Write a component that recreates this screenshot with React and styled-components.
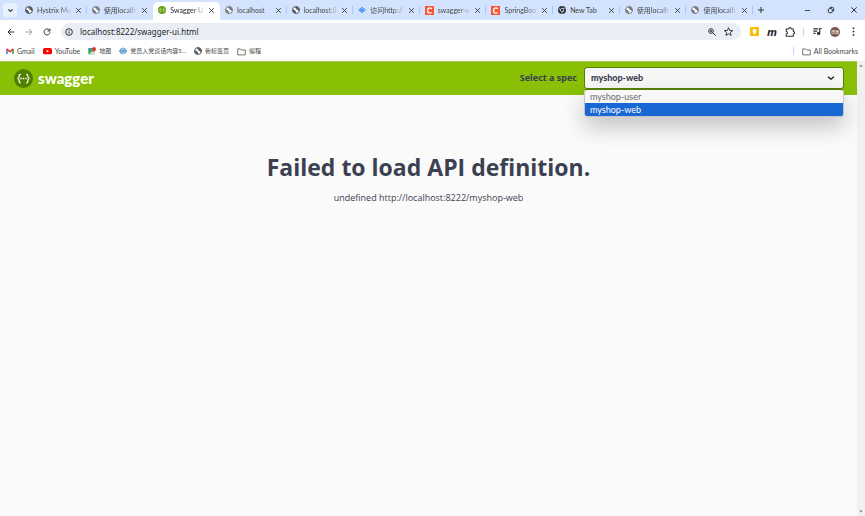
import React, { useState } from "react";
import styled, { createGlobalStyle, css } from "styled-components";

const GlobalStyle = createGlobalStyle`
  * { box-sizing: border-box; }
  body { margin: 0; background: #fafafa; }
  button, select, input { font: inherit; color: inherit; }
`;

const ui = `Lato, "Noto Sans CJK SC", sans-serif`;

const Browser = styled.div`
  display: flex;
  flex-direction: column;
  min-height: 100vh;
  font: 7px/10px ${ui};
  color: #474747;
  background: #fff;
`;

const TabStrip = styled.header`
  display: flex;
  align-items: center;
  height: 20px;
  background: #d3e3fd;
`;

const IconButton = styled.button`
  display: inline-flex;
  align-items: center;
  justify-content: center;
  flex: none;
  width: ${(p) => p.$w || 10}px;
  height: ${(p) => p.$h || 12}px;
  padding: 0;
  border: 0;
  border-radius: 4px;
  background: ${(p) => p.$bg || "transparent"};
  color: ${(p) => p.$color || "#303235"};
`;

const SearchTabs = styled(IconButton)`
  margin: 0 3px;
`;

const TabList = styled.nav`
  display: flex;
  flex: 1;
  align-items: stretch;
  height: 20px;
  min-width: 0;
`;

const Tab = styled.div`
  display: flex;
  align-items: center;
  flex: 1 1 0;
  min-width: 0;
  margin-top: ${(p) => (p.$active ? 2 : 0)}px;
  padding: 0 7px 0 5px;
  gap: 4px;
  border-radius: 5px 5px 0 0;
  ${(p) => p.$active && css`background: #fff; padding-bottom: 2px;`}
  &::after {
    content: "";
    width: 1px;
    height: 8px;
    margin-right: -7px;
    background: ${(p) => (p.$line ? "#a8c7fa" : "transparent")};
  }
`;

const TabTitle = styled.a`
  flex: 1;
  min-width: 0;
  white-space: nowrap;
  color: ${(p) => (p.$active ? "#1f1f1f" : "#474747")};
  text-decoration: none;
  mask-image: linear-gradient(to right, #000 65%, transparent 105%);
  ${(p) => p.$short && css`mask-image: none;`}
`;

const WindowButtons = styled.div`
  display: flex;
  gap: 12px;
  margin: 0 6px 0 33px;
`;

const Toolbar = styled.div`
  display: flex;
  align-items: center;
  height: 23px;
  padding: 0 7px 0 6px;
  border-top-right-radius: 5px;
  background: #fff;
`;

const Nav = styled.div`
  display: flex;
  gap: 8px;
  margin-right: 9px;
`;

const AddressBar = styled.div`
  display: flex;
  align-items: center;
  flex: 1;
  height: 17px;
  padding: 0 8px 0 3px;
  gap: 6px;
  border-radius: 9px;
  background: #e9eef6;
`;

const Address = styled.input`
  flex: 1;
  min-width: 0;
  padding: 0;
  border: 0;
  outline: 0;
  background: transparent;
  font: 8px/12px "Noto Sans", sans-serif;
  color: #1f1f1f;
`;

const Extensions = styled.div`
  display: flex;
  align-items: center;
  gap: 8px;
  margin-left: 8px;
`;

const ExtensionLetter = styled.span`
  width: 10px;
  font: italic bold 11px/12px "Open Sans", sans-serif;
  text-align: center;
  color: #1f1f1f;
`;

const Divider = styled.span`
  width: 1px;
  height: 8px;
  background: #c2d7fb;
`;

const Avatar = styled.span`
  width: 10px;
  height: 10px;
  overflow: hidden;
  border-radius: 50%;
  background: #795548;
  color: #fff;
  font: 4px/10px "Noto Sans CJK SC", sans-serif;
  text-align: center;
`;

const Bookmarks = styled.nav`
  display: flex;
  align-items: center;
  height: 18px;
  padding: 0 7px 2px 6px;
  gap: 8px;
`;

const Bookmark = styled.a`
  display: flex;
  align-items: center;
  gap: 3px;
  font-size: ${(p) => (p.$cjk ? 6 : 7)}px;
  color: #474747;
  text-decoration: none;
  white-space: nowrap;
`;

const AllBookmarks = styled.div`
  display: flex;
  align-items: center;
  gap: 8px;
  margin-left: auto;
`;

const Viewport = styled.div`
  display: flex;
  flex: 1;
`;

const Page = styled.div`
  flex: 1;
  min-width: 0;
  background: #fafafa;
`;

const Scrollbar = styled.div`
  display: flex;
  flex-direction: column;
  justify-content: space-between;
  align-items: center;
  width: 8px;
  padding: 3px 0;
  background: #f1f1f1;
`;

const Topbar = styled.div`
  display: flex;
  align-items: center;
  justify-content: space-between;
  height: 34px;
  padding: 0 13px 1px 14px;
  border-top: 1px solid #a9c95f;
  background: #89bf04;
`;

const Logo = styled.a`
  display: flex;
  align-items: center;
  gap: 5px;
  color: #fff;
  text-decoration: none;
  font: 900 15px/18px Lato, sans-serif;
`;

const SpecLabel = styled.label`
  margin: 0 7px 0 auto;
  font: bold 9px/12px "Noto Sans", sans-serif;
  color: #3b4151;
`;

const SelectWrap = styled.div`
  position: relative;
  flex: 0 1 260px;
  height: 22px;
`;

const Select = styled.select`
  width: 100%;
  height: 22px;
  padding: 0 6px;
  appearance: none;
  border: 1px solid #547f00;
  border-radius: 3px;
  outline: 0;
  background: #f7f7f7;
  color: #3b4151;
  font: 900 9px/12px Lato, sans-serif;
`;

const SelectArrow = styled.span`
  position: absolute;
  top: 6px;
  right: 8px;
  display: flex;
  color: #111;
  pointer-events: none;
`;

const Options = styled.ul`
  position: absolute;
  top: 22px;
  left: 0;
  right: 0;
  margin: 0;
  padding: 0;
  overflow: hidden;
  list-style: none;
  border: 1px solid #c3c6c9;
  border-top-color: #547f00;
  border-radius: 3px;
  background: #f7f7f7;
  box-shadow: 0 10px 22px rgba(0, 0, 0, 0.22);
`;

const Option = styled.li`
  height: 13px;
  padding: 0 5px;
  font: 9px/13px Lato, sans-serif;
  background: ${(p) => (p.$selected ? "#1967d2" : "transparent")};
  color: ${(p) => (p.$selected ? "#fff" : "#6b6b73")};
`;

const Failure = styled.main`
  padding: 54px 20px;
  text-align: center;
  color: #3b4151;
`;

const FailureTitle = styled.h1`
  margin: 0 0 7px;
  font: bold 23px/36px "Open Sans", sans-serif;
`;

const FailureText = styled.p`
  margin: 0;
  font: 9px/12px "Open Sans", sans-serif;
`;

const Line = ({ size = 8, d, w = 2, children }) => (
  <svg width={size} height={size} viewBox="0 0 24 24" fill="none" stroke="currentColor" strokeWidth={w} aria-hidden="true">
    {d && <path d={d} />}
    {children}
  </svg>
);

const Close = ({ size = 7 }) => <Line size={size} w={3} d="M4 4l16 16M20 4L4 20" />;

const Globe = ({ faded }) => (
  <svg width="8" height="8" viewBox="0 0 24 24" aria-hidden="true">
    <circle cx="12" cy="12" r="10.5" fill="#fff" stroke={faded ? "#72777d" : "#50555b"} strokeWidth="3" />
    <path d="M2 10l7 3 1 3 3 1-2 5C5 21 1 16 2 10zM11 2l-2 4 5 2-1 3 5 1 2 4c4-6 1-14-9-14z" fill={faded ? "#72777d" : "#50555b"} />
  </svg>
);

const SwaggerIcon = ({ size = 8, bg = "#6b9f13", fg = "#fff" }) => (
  <svg width={size} height={size} viewBox="0 0 24 24" aria-hidden="true">
    <circle cx="12" cy="12" r="12" fill={bg} />
    <path d="M8.5 6.5Q6.5 6.5 6.5 9T4.5 12Q6.5 12.500 6.500 15T8.500 17.500M15.500 6.500Q17.500 6.500 17.500 9T19.500 12Q17.500 12.500 17.500 15T15.500 17.500" fill="none" stroke={fg} strokeWidth="1.600" />
    <path d="M8 12h1.800M11.100 12h1.800M14.200 12h1.800" stroke={fg} strokeWidth="1.800" />
  </svg>
);

const Diamond = () => (
  <svg width="8" height="8" viewBox="0 0 24 24" fill="none" stroke="#2d86f5" strokeWidth="2.500" aria-hidden="true">
    <path d="M1.500 12L12 4l10.500 8L12 20z" />
    <path d="M7 12l5-3.500 5 3.500-5 3.500z" fill="#2d86f5" />
  </svg>
);

const CIcon = () => (
  <svg width="9" height="9" viewBox="0 0 24 24" aria-hidden="true">
    <rect width="24" height="24" fill="#fc5531" />
    <path d="M18 8c-1-2-3-3-5-3-4 0-6 3-6 7 0 5 3 7 6 7 2 0 4-1 5-2" fill="none" stroke="#fff" strokeWidth="3.500" />
  </svg>
);

const ChromeIcon = () => (
  <svg width="8" height="8" viewBox="0 0 24 24" aria-hidden="true">
    <circle cx="12" cy="12" r="12" fill="#303235" />
    <circle cx="12" cy="12" r="5" fill="#303235" stroke="#dfe9fb" strokeWidth="2" />
    <path d="M12 7h11M7.700 14.500L2 5M16.300 14.500L11 24" stroke="#dfe9fb" strokeWidth="1.800" />
  </svg>
);

const Folder = () => <Line size={9} d="M2 5h7l3 3h10v13H2z" />;

const Gmail = () => (
  <svg width="8" height="8" viewBox="0 0 24 24" fill="none" strokeWidth="5" aria-hidden="true">
    <path d="M3 21V6" stroke="#4285f4" />
    <path d="M21 21V6" stroke="#34a853" />
    <path d="M2 6l10 8 10-8" stroke="#ea4335" />
  </svg>
);

const YouTube = () => (
  <svg width="9" height="8" viewBox="0 0 27 24" aria-hidden="true">
    <rect y="3" width="27" height="19" rx="5" fill="#f00" />
    <path d="M11 8.500l7 4-7 4z" fill="#fff" />
  </svg>
);

const MapIcon = () => (
  <svg width="8" height="8" viewBox="0 0 24 24" aria-hidden="true">
    <path d="M1 3h18v19H1z" fill="#34a853" />
    <path d="M3 22L20 6v16z" fill="#d8dce2" />
    <path d="M3 3h8L1 13z" fill="#4285f4" />
    <path d="M18 0a6 6 0 0 0-6 6c0 4 6 10 6 10s6-6 6-10a6 6 0 0 0-6-6z" fill="#ea4335" />
    <circle cx="18" cy="6" r="2" fill="#811" />
  </svg>
);

const BlueSite = () => (
  <svg width="8" height="8" viewBox="0 0 24 24" fill="none" stroke="#287bc4" strokeWidth="2" aria-hidden="true">
    <circle cx="12" cy="12" r="9" />
    <path d="M0 12h6M18 12h6M9 6v12M15 6v12M9 12h6" strokeWidth="3" />
  </svg>
);

const KeepIcon = () => (
  <svg width="9" height="9" viewBox="0 0 24 24" aria-hidden="true">
    <rect width="24" height="24" rx="2" fill="#fbbc04" />
    <circle cx="12" cy="10" r="5" fill="#fff" />
    <path d="M9 13h6v6H9z" fill="#fff" />
  </svg>
);

const Triangle = ({ down }) => (
  <svg width="4" height="3" viewBox="0 0 8 6" aria-hidden="true">
    <path d={down ? "M0 1h8L4 5z" : "M0 5h8L4 1z"} fill="#858585" />
  </svg>
);

const tabs = [
  { title: "Hystrix Mo", icon: <Globe />, line: true },
  { title: "使用localh", icon: <Globe faded /> },
  { title: "Swagger U", icon: <SwaggerIcon />, active: true },
  { title: "localhost", icon: <Globe faded />, short: true, line: true },
  { title: "localhost:8", icon: <Globe />, line: true },
  { title: "访问http://", icon: <Diamond />, line: true },
  { title: "swagger-u", icon: <CIcon />, line: true },
  { title: "SpringBoo", icon: <CIcon />, line: true },
  { title: "New Tab", icon: <ChromeIcon />, line: true, short: true },
  { title: "使用localh", icon: <Globe faded />, line: true },
  { title: "使用localh", icon: <Globe faded />, line: true },
];

const bookmarks = [
  { title: "Gmail", icon: <Gmail /> },
  { title: "YouTube", icon: <YouTube /> },
  { title: "地图", icon: <MapIcon />, cjk: true },
  { title: "党员入党谈话内容5...", icon: <BlueSite />, cjk: true },
  { title: "新标签页", icon: <Globe />, cjk: true },
  { title: "编程", icon: <Folder />, cjk: true },
];

const specs = ["myshop-user", "myshop-web"];

export default function App() {
  const [spec, setSpec] = useState("myshop-web");
  return (
    <Browser>
      <GlobalStyle />
      <TabStrip>
        <SearchTabs $w={14} $h={14} $bg="#e9f1fe" aria-label="Search tabs">
          <Line size={7} w={4} d="M5 8l7 7 7-7" />
        </SearchTabs>
        <TabList>
          {tabs.map((t, i) => (
            <Tab key={i} $active={t.active} $line={t.line}>
              {t.icon}
              <TabTitle href="#" $active={t.active} $short={t.short}>{t.title}</TabTitle>
              <IconButton $w={7} aria-label="Close tab"><Close /></IconButton>
            </Tab>
          ))}
        </TabList>
        <IconButton $w={16} aria-label="New tab"><Line size={8} w={3} d="M12 3v18M3 12h18" /></IconButton>
        <WindowButtons>
          <IconButton $w={11} aria-label="Minimize"><Line size={7} w={3} d="M3 12h18" /></IconButton>
          <IconButton $w={11} aria-label="Restore">
            <Line size={8} w={3}><rect x="4" y="8" width="12" height="12" rx="3" /><path d="M8 4h8q4 0 4 4v8" /></Line>
          </IconButton>
          <IconButton $w={11} aria-label="Close"><Close size={8} /></IconButton>
        </WindowButtons>
      </TabStrip>

      <Toolbar>
        <Nav>
          <IconButton aria-label="Back"><Line w={3} d="M22 12H4M12 3l-9 9 9 9" /></IconButton>
          <IconButton $color="#9b9da0" aria-label="Forward"><Line w={3} d="M2 12h18M12 3l9 9-9 9" /></IconButton>
          <IconButton aria-label="Reload"><Line w={3} d="M19 6a9 9 0 1 0 2 7M21 2v7h-7" /></IconButton>
        </Nav>
        <AddressBar>
          <IconButton $w={10} aria-label="Site information">
            <Line w={3}><circle cx="12" cy="12" r="10" /><path d="M12 10.500v7M12 6v2.500" /></Line>
          </IconButton>
          <Address aria-label="Address" defaultValue="localhost:8222/swagger-ui.html" />
          <IconButton aria-label="Zoom"><Line w={3}><circle cx="9" cy="9" r="7" /><path d="M14 14l9 9M5.500 9h7M9 5.500v7" /></Line></IconButton>
          <IconButton aria-label="Bookmark"><Line size={9} w={2.5} d="M12 2l3 7 8 .600-6 5 2 8-7-4.400-7 4.400 2-8-6-5 8-.600z" /></IconButton>
        </AddressBar>
        <Extensions>
          <IconButton aria-label="Keep"><KeepIcon /></IconButton>
          <ExtensionLetter>m</ExtensionLetter>
          <IconButton aria-label="Extensions"><Line size={10} w={2.5} d="M3 5h6c0-5 6-5 6 0h5v6c4 0 4 6 0 6v5H3v-6c4 0 4-5 0-5z" /></IconButton>
          <Divider />
          <IconButton aria-label="Media"><Line size={9} w={3}><path d="M1 5h13M1 11h10M1 17h6M18 17V4h5" /><circle cx="15" cy="17" r="3" fill="currentColor" /></Line></IconButton>
          <Avatar>德康</Avatar>
          <IconButton aria-label="Menu">
            <svg width="9" height="9" viewBox="0 0 24 24" fill="#303235"><circle cx="12" cy="3" r="2.500" /><circle cx="12" cy="12" r="2.500" /><circle cx="12" cy="21" r="2.500" /></svg>
          </IconButton>
        </Extensions>
      </Toolbar>

      <Bookmarks>
        {bookmarks.map((b) => (
          <Bookmark key={b.title} href="#" $cjk={b.cjk}>{b.icon}{b.title}</Bookmark>
        ))}
        <AllBookmarks>
          <Divider />
          <Bookmark href="#"><Folder />All Bookmarks</Bookmark>
        </AllBookmarks>
      </Bookmarks>

      <Viewport>
        <Page>
          <Topbar>
            <Logo href="#"><SwaggerIcon size={19} bg="#4f8000" />swagger</Logo>
            <SpecLabel htmlFor="spec">Select a spec</SpecLabel>
            <SelectWrap>
              <Select id="spec" value={spec} onChange={(e) => setSpec(e.target.value)}>
                {specs.map((s) => <option key={s}>{s}</option>)}
              </Select>
              <SelectArrow><Line size={10} w={3} d="M5 9l7 6 7-6" /></SelectArrow>
              <Options role="listbox" aria-label="Specs">
                {specs.map((s) => (
                  <Option key={s} role="option" aria-selected={s === spec} $selected={s === spec} onClick={() => setSpec(s)}>{s}</Option>
                ))}
              </Options>
            </SelectWrap>
          </Topbar>
          <Failure>
            <FailureTitle>Failed to load API definition.</FailureTitle>
            <FailureText>undefined http://localhost:8222/myshop-web</FailureText>
          </Failure>
        </Page>
        <Scrollbar><Triangle /><Triangle down /></Scrollbar>
      </Viewport>
    </Browser>
  );
}
